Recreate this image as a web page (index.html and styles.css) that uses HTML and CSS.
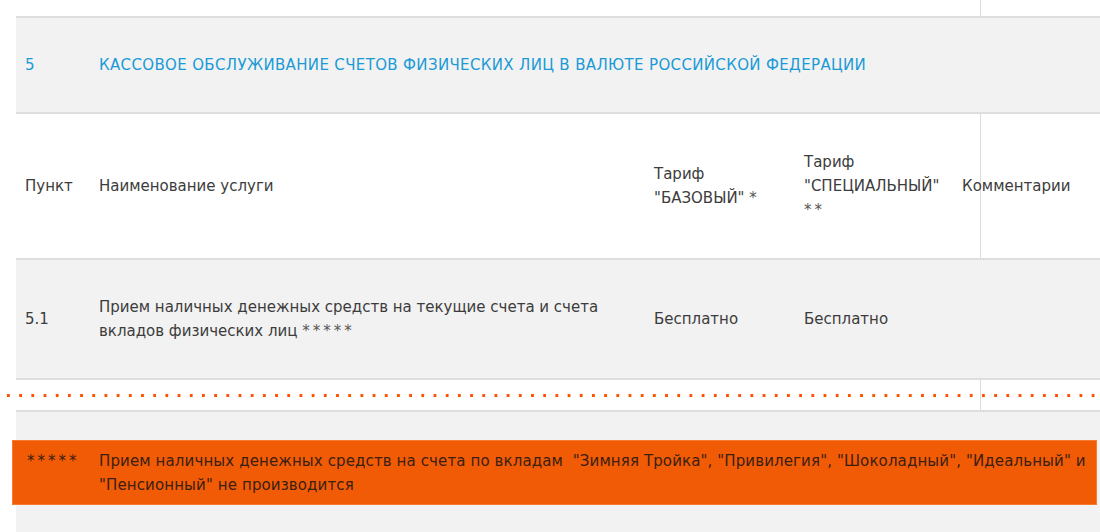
FILE: index.html
```html
<!DOCTYPE html>
<html lang="ru">
<head>
    <meta charset="utf-8">
    <title>Тарифы - кассовое обслуживание</title>
    <link rel="stylesheet" href="styles.css">
</head>
<body>
    <div class="page">
        <!-- Tariff table, section 5 -->
        <div class="tariffs">
            <div class="row section">
                <div class="cell">5</div>
                <div class="cell wide">КАССОВОЕ ОБСЛУЖИВАНИЕ СЧЕТОВ ФИЗИЧЕСКИХ ЛИЦ В ВАЛЮТЕ РОССИЙСКОЙ ФЕДЕРАЦИИ</div>
            </div>
            <div class="row head">
                <div class="cell">Пункт</div>
                <div class="cell">Наименование услуги</div>
                <div class="cell">Тариф "БАЗОВЫЙ" <span class="stars">*</span></div>
                <div class="cell">Тариф "СПЕЦИАЛЬНЫЙ" <span class="stars">**</span></div>
                <div class="cell comment">Комментарии</div>
            </div>
            <div class="row item">
                <div class="cell">5.1</div>
                <div class="cell">Прием наличных денежных средств на текущие счета и счета вкладов физических лиц <span class="stars">*****</span></div>
                <div class="cell">Бесплатно</div>
                <div class="cell">Бесплатно</div>
                <div class="cell comment"></div>
            </div>
        </div>

        <div class="divider"></div>

        <!-- Footnotes -->
        <div class="notes">
            <div class="note">
                <span class="mark stars">*****</span>
                <span class="text">Прием наличных денежных средств на счета по вкладам &nbsp;"Зимняя Тройка", "Привилегия", "Шоколадный", "Идеальный" и "Пенсионный" не производится</span>
            </div>
        </div>
    </div>
</body>
</html>
```

FILE: styles.css
```css
body {
    margin: 0;
    font-family: "DejaVu Sans", Verdana, sans-serif;
    font-size: 15px;
    line-height: 24px;
    color: #3c3c3c;
    background: #fff;
}
.page {
    height: 532px;
    padding-top: 16px;
    box-sizing: border-box;
    overflow: hidden;
    /* thin vertical rule seen through the white rows */
    background: linear-gradient(#dcdcdc, #dcdcdc) no-repeat 980px 0 / 1px 100%;
}
.tariffs {
    margin-left: 16px;
    border-bottom: 2px solid #dedede;
}
.row {
    display: grid;
    grid-template-columns: 74px 555px 150px 158px 1fr;
    align-items: center;
    border-top: 2px solid #dedede;
}
.cell {
    padding: 0 9px;
}
.cell.wide {
    grid-column: 2 / 6;
}
.comment {
    white-space: nowrap;
}
.stars {
    letter-spacing: 3px;
    color: #555;
}

.section {
    height: 94px;
    background: #f2f2f2;
    color: #1a9ad6;
    letter-spacing: 0.35px;
}
.head {
    height: 144px;
}
.item {
    height: 118px;
    background: #f2f2f2;
}

.divider {
    height: 30px;
    background: linear-gradient(to right, #ff5200 3px, transparent 3px) repeat-x 7px 14px / 12.2px 3px;
}

.notes {
    margin-left: 16px;
    height: 200px;
    border-top: 2px solid #dedede;
    background: #f2f2f2;
    padding-top: 28px;
}
.note {
    display: flex;
    margin-left: -4px;
    width: 1083px;
    padding: 8px 0 7px;
    background: #f25b06;
    border: 1px solid #f77a30;
    color: #3a2010;
    letter-spacing: 0.12px;
}
.note .mark {
    flex: 0 0 72px;
    padding-left: 14px;
    color: #3a2010;
    letter-spacing: 3px;
}
.note .text {
    flex: 1;
    padding-right: 4px;
}
```
